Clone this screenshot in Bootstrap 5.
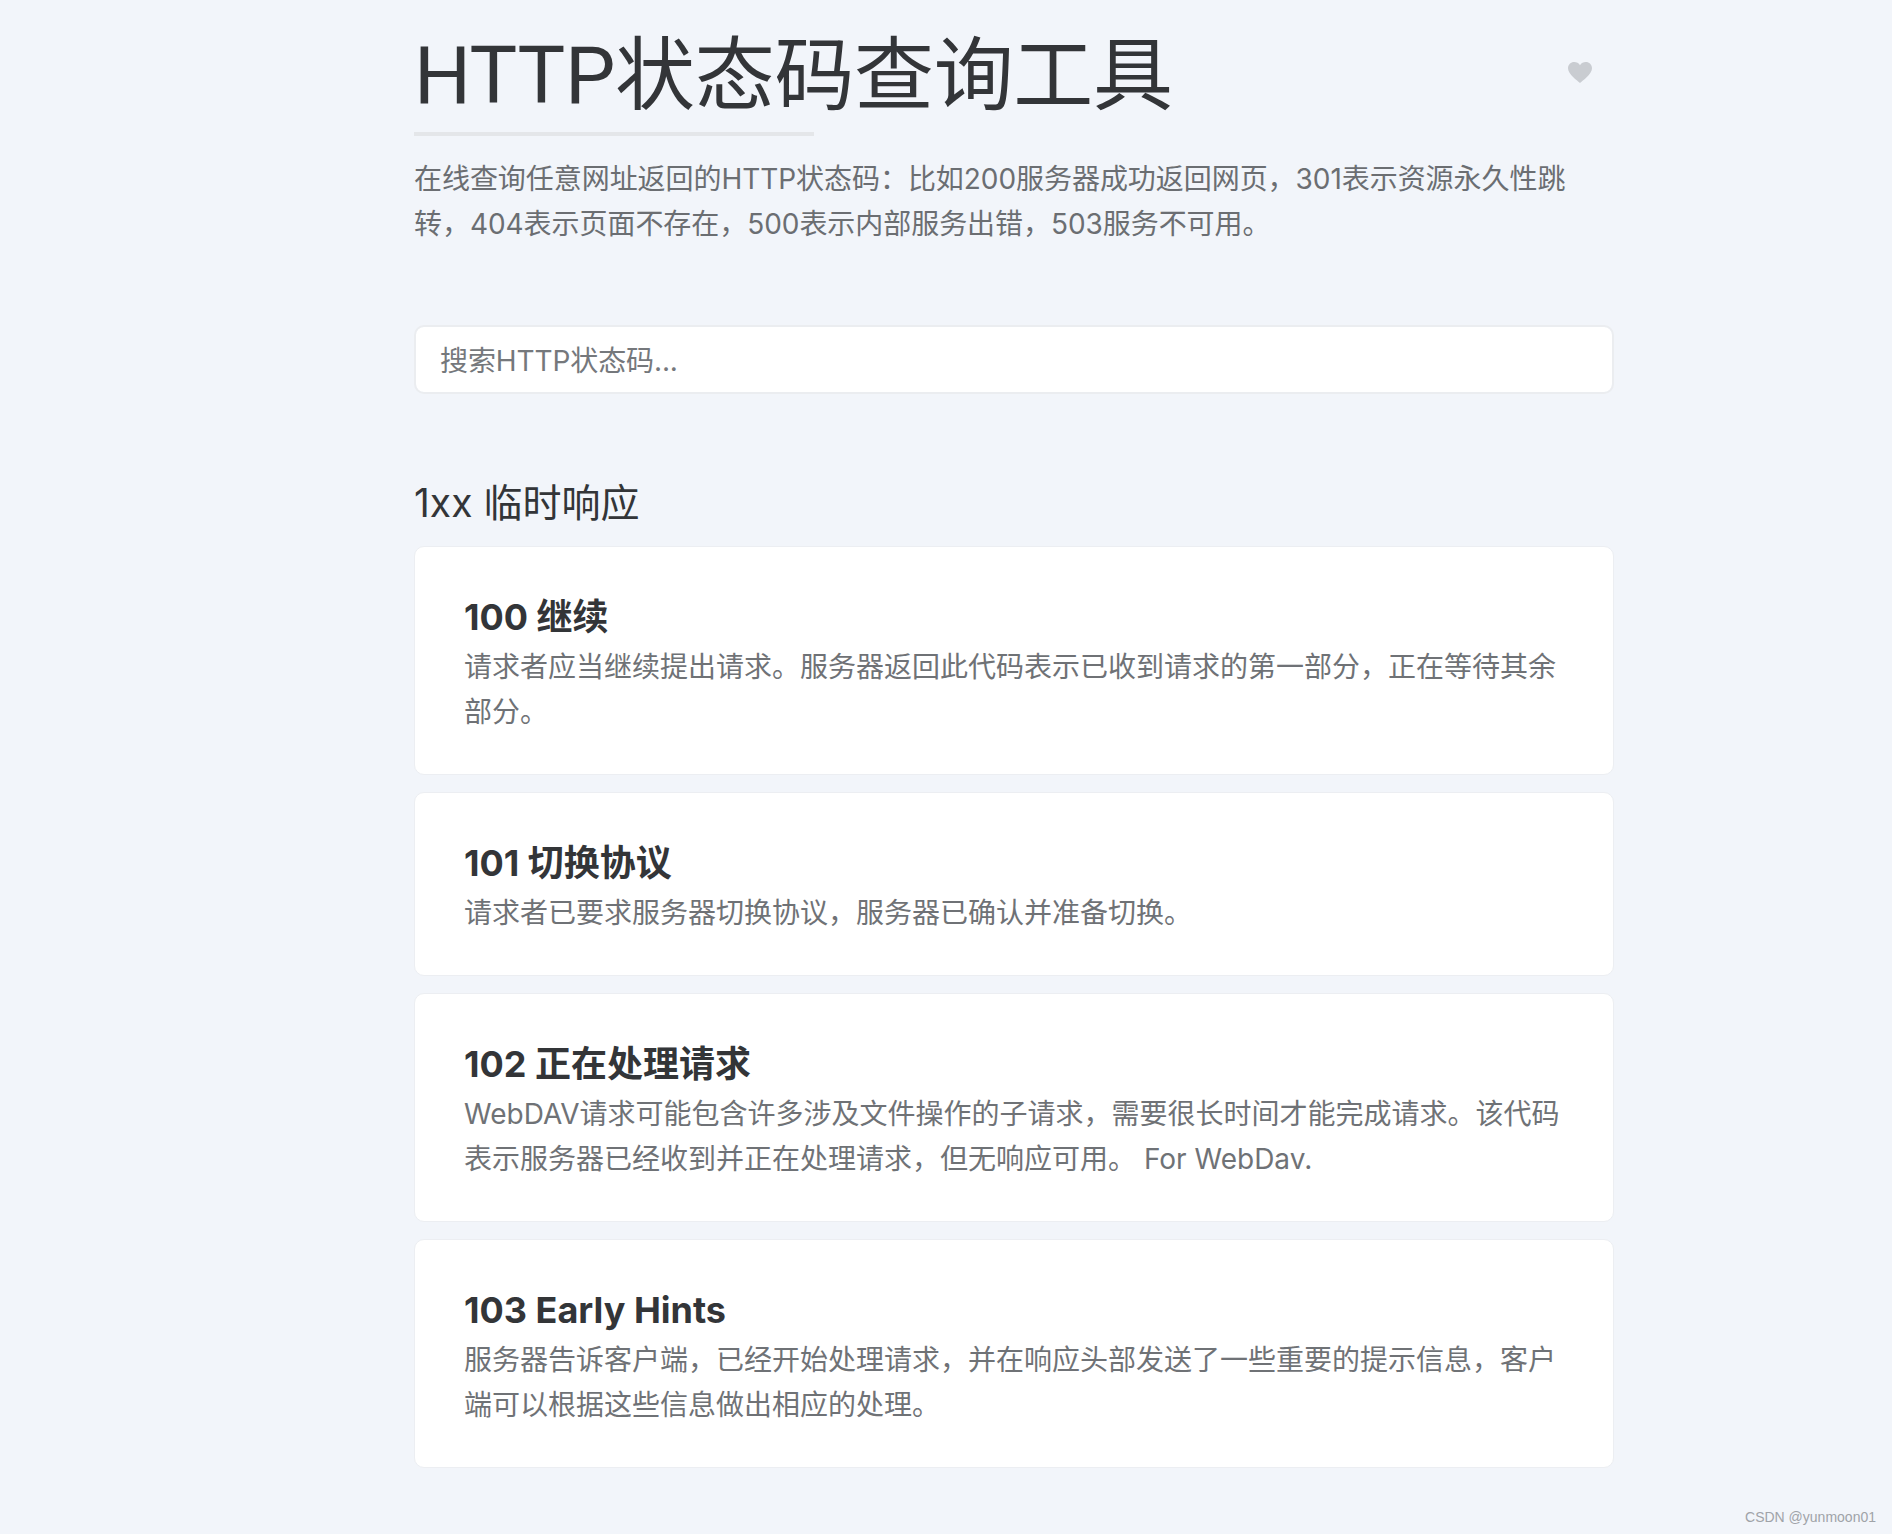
<!DOCTYPE html>
<html lang="zh-CN">
<head>
  <meta charset="UTF-8">
  <title>HTTP状态码查询工具</title>
  <meta name="viewport" content="width=device-width, initial-scale=1">
  <link href="https://cdn.jsdelivr.net/npm/bootstrap@5.3.2/dist/css/bootstrap.min.css" rel="stylesheet" />
  <style>
    body {
      background-color: #f2f5fa;
      color: #333538;
      font-family: Inter, "Noto Sans CJK SC", sans-serif;
      min-height: 1534px;
      overflow: hidden;
    }
    .page {
      width: 1200px;
      margin-left: 414px;
    }
    .page-title {
      font-family: Roboto, "Noto Sans CJK SC", sans-serif;
      font-size: 80px;
      font-weight: 400;
      line-height: 96px;
      letter-spacing: -0.35px;
      padding-top: 28px;
      margin-bottom: 8px;
    }
    .fav {
      margin-top: 62px;
      margin-right: 22px;
    }
    .title-rule {
      width: 400px;
      height: 4px;
      background-color: #e4e6e9;
    }
    .intro {
      width: 1165px;
      margin-top: 21px;
      margin-bottom: 78px;
      font-size: 28px;
      line-height: 45px;
      letter-spacing: -0.05px;
      color: #6b6e72;
    }
    .search {
      height: 69px;
      padding: 2px 24px 0;
      font-size: 28px;
      letter-spacing: -0.1px;
      border: 2px solid #ebedf0;
      border-radius: 10px;
    }
    .search::placeholder {
      color: #75787c;
    }
    .group-title {
      margin-top: 85px;
      margin-bottom: 19px;
      font-size: 39px;
      font-weight: 400;
      line-height: 48px;
    }
    .status-list {
      gap: 17.5px;
    }
    .status-card {
      padding: 43px 49px 39px;
      border: 1px solid #eceef2;
      border-radius: 10px;
      background-color: #fff;
    }
    .status-card h5 {
      margin: 0;
      font-size: 36px;
      font-weight: 700;
      line-height: 54.5px;
    }
    .status-card p {
      margin: 0;
      font-size: 28px;
      line-height: 45px;
      color: #6f7276;
    }
    .watermark {
      right: 16px;
      bottom: 6px;
      font-family: "Liberation Sans", sans-serif;
      font-size: 14px;
      color: #a0a3a8;
    }
  </style>
</head>
<body>

<div class="page">
  <div class="d-flex justify-content-between align-items-start">
    <h1 class="page-title">HTTP状态码查询工具</h1>
    <svg class="fav" width="24" height="21" viewBox="0 0 24 21" fill="#c9ccd1" aria-hidden="true">
      <path d="M12 21C9.5 18.6 0 12.5 0 6.3 0 2.6 2.8 0 6.2 0 8.6 0 10.8 1.2 12 3.2 13.2 1.2 15.4 0 17.8 0 21.2 0 24 2.6 24 6.3 24 12.5 14.5 18.6 12 21Z"/>
    </svg>
  </div>
  <div class="title-rule"></div>
  <p class="intro">在线查询任意网址返回的HTTP状态码：比如200服务器成功返回网页，301表示资源永久性跳转，404表示页面不存在，500表示内部服务出错，503服务不可用。</p>

  <input class="form-control search" type="text" placeholder="搜索HTTP状态码...">

  <h4 class="group-title">1xx 临时响应</h4>
  <div class="d-flex flex-column status-list">
    <div class="status-card">
      <h5>100 继续</h5>
      <p>请求者应当继续提出请求。服务器返回此代码表示已收到请求的第一部分，正在等待其余部分。</p>
    </div>
    <div class="status-card">
      <h5>101 切换协议</h5>
      <p>请求者已要求服务器切换协议，服务器已确认并准备切换。</p>
    </div>
    <div class="status-card">
      <h5>102 正在处理请求</h5>
      <p>WebDAV请求可能包含许多涉及文件操作的子请求，需要很长时间才能完成请求。该代码表示服务器已经收到并正在处理请求，但无响应可用。 For WebDav.</p>
    </div>
    <div class="status-card">
      <h5>103 Early Hints</h5>
      <p>服务器告诉客户端，已经开始处理请求，并在响应头部发送了一些重要的提示信息，客户端可以根据这些信息做出相应的处理。</p>
    </div>
  </div>
</div>

<div class="watermark position-absolute">CSDN @yunmoon01</div>

<script src="https://cdn.jsdelivr.net/npm/bootstrap@5.3.2/dist/js/bootstrap.bundle.min.js"></script>
</body>
</html>
